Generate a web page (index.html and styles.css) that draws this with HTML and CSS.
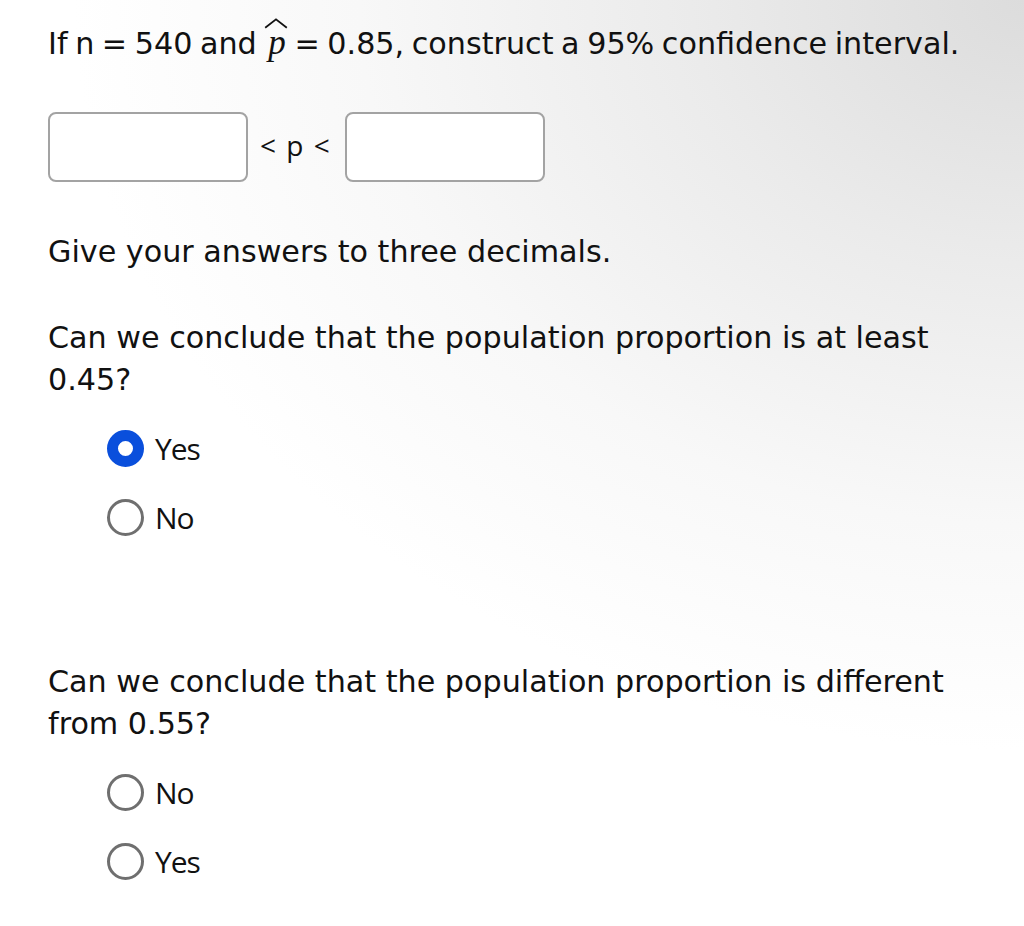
FILE: index.html
```html
<!DOCTYPE html>
<html>
<head>
<meta charset="utf-8">
<link rel="stylesheet" href="styles.css">
</head>
<body>
<div class="page">
  <p class="q title">If n = 540 and <span class="phat">p<svg class="hat" viewBox="0 0 20 10" width="24" height="12"><path d="M1 9 L10 2 L19 9" fill="none" stroke="#111" stroke-width="1.5"/></svg></span> = 0.85, construct a 95% confidence interval.</p>
  <div class="interval">
    <div class="box"></div>
    <span class="lt">&lt; p &lt;</span>
    <div class="box"></div>
  </div>
  <p class="q give">Give your answers to three decimals.</p>
  <p class="q q1">Can we conclude that the population proportion is at least 0.45?</p>
  <div class="options">
    <div class="opt"><span class="radio on"></span><span class="lab">Yes</span></div>
    <div class="opt"><span class="radio"></span><span class="lab">No</span></div>
  </div>
  <p class="q q2">Can we conclude that the population proportion is different from 0.55?</p>
  <div class="options">
    <div class="opt"><span class="radio"></span><span class="lab">No</span></div>
    <div class="opt"><span class="radio"></span><span class="lab">Yes</span></div>
  </div>
</div>
</body>
</html>
```
FILE: styles.css
```css
html, body {
  margin: 0;
  padding: 0;
  height: 100%;
}
body {
  background: radial-gradient(ellipse 950px 750px at 100% 0%, #dcdcdc 0%, #ebebeb 35%, #f8f8f8 70%, #ffffff 100%);
  color: #111;
  font-family: "DejaVu Sans", sans-serif;
}
.page {
  padding: 22px 48px 0 48px;
}
.q {
  margin: 0;
  font-size: 30.2px;
  line-height: 42px;
}
.title {
  word-spacing: -2px;
}
.phat {
  position: relative;
  font-family: "Liberation Serif", serif;
  font-style: italic;
  font-size: 35px;
  padding: 0 1px 0 4px;
}
.hat {
  position: absolute;
  left: 0px;
  top: -6px;
}
.interval {
  display: flex;
  align-items: center;
  margin-top: 47px;
}
.box {
  width: 196px;
  height: 66px;
  border: 2px solid #a3a3a3;
  border-radius: 8px;
  background: #fff;
}
.lt {
  font-family: "Open Sans", sans-serif;
  font-size: 28px;
  word-spacing: 3px;
  margin: -4px 15px 0 12px;
}
.give {
  margin-top: 49px;
}
.q1 {
  margin-top: 44px;
}
.q2 {
  margin-top: 125px;
}
.options {
  padding-left: 59px;
  margin-top: 28px;
  display: flex;
  flex-direction: column;
  gap: 31px;
}
.opt {
  display: flex;
  align-items: center;
  gap: 11px;
  height: 38px;
}
.radio {
  box-sizing: border-box;
  width: 37px;
  height: 37px;
  border-radius: 50%;
  border: 3px solid #6f6f6f;
  background: #fff;
}
.radio.on {
  border: 11px solid #0a4fdc;
}
.lab {
  font-family: "Open Sans", sans-serif;
  font-size: 30px;
  letter-spacing: -1px;
  color: #111;
}
```
